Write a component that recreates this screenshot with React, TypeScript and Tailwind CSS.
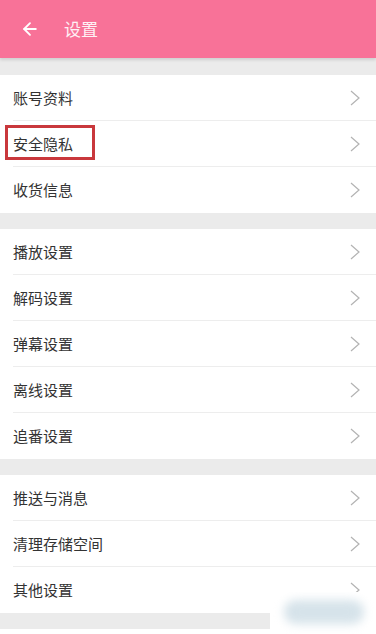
import { ArrowLeft } from 'lucide-react';

const groups: string[][] = [
  ['账号资料', '安全隐私', '收货信息'],
  ['播放设置', '解码设置', '弹幕设置', '离线设置', '追番设置'],
  ['推送与消息', '清理存储空间', '其他设置'],
];

function Chevron() {
  return (
    <svg width="10" height="16" viewBox="0 0 10 16" className="ml-auto text-[#b3b3b3]" fill="none">
      <path d="M1 1 L9 8 L1 15" stroke="currentColor" strokeWidth="1.2" strokeLinejoin="miter" />
    </svg>
  );
}

function Row({ label, last, marked }: { label: string; last: boolean; marked?: boolean }) {
  return (
    <div className="relative h-[46px] flex items-center pl-[13px] pr-[16px] bg-white">
      <span className="text-[15px] text-[#333333] leading-none -mt-[2px]">{label}</span>
      <Chevron />
      {!last && <div className="absolute left-[13px] right-0 bottom-0 h-px bg-[#ededed]" />}
      {marked && (
        <div className="absolute left-[5px] top-[4px] w-[90px] h-[35px] border-[3px] border-[#c9383c]" />
      )}
    </div>
  );
}

export default function App() {
  return (
    <div
      className="relative w-[376px] h-[634px] overflow-hidden bg-[#ebebeb]"
      style={{ fontFamily: '"Noto Sans CJK SC", "Noto Sans", sans-serif' }}
    >
      {/* Header */}
      <div className="h-[58px] bg-[#f87298] flex items-center shadow-[0_2px_3px_rgba(0,0,0,0.12)] relative z-10">
        <ArrowLeft className="ml-[20px] w-[20px] h-[20px] text-white" strokeWidth={2.2} />
        <span className="ml-[24px] text-[17px] text-white/90">设置</span>
      </div>

      <div className="pt-[17px] flex flex-col gap-[16px]">
        {groups.map((g, gi) => (
          <div key={gi} className="flex flex-col">
            {g.map((label, i) => (
              <Row key={label} label={label} last={i === g.length - 1} marked={label === '安全隐私'} />
            ))}
          </div>
        ))}
      </div>

      {/* Bottom white strip */}
      <div className="absolute left-0 right-0 bottom-0 h-[5px] bg-white" />

      {/* Blurred watermark */}
      <div className="absolute right-0 bottom-0 w-[106px] h-[42px] bg-white overflow-hidden">
        <div className="absolute left-[14px] top-[8px] w-[80px] h-[24px] rounded-full bg-[#d6e3ea] blur-[5px]" />
      </div>
    </div>
  );
}
